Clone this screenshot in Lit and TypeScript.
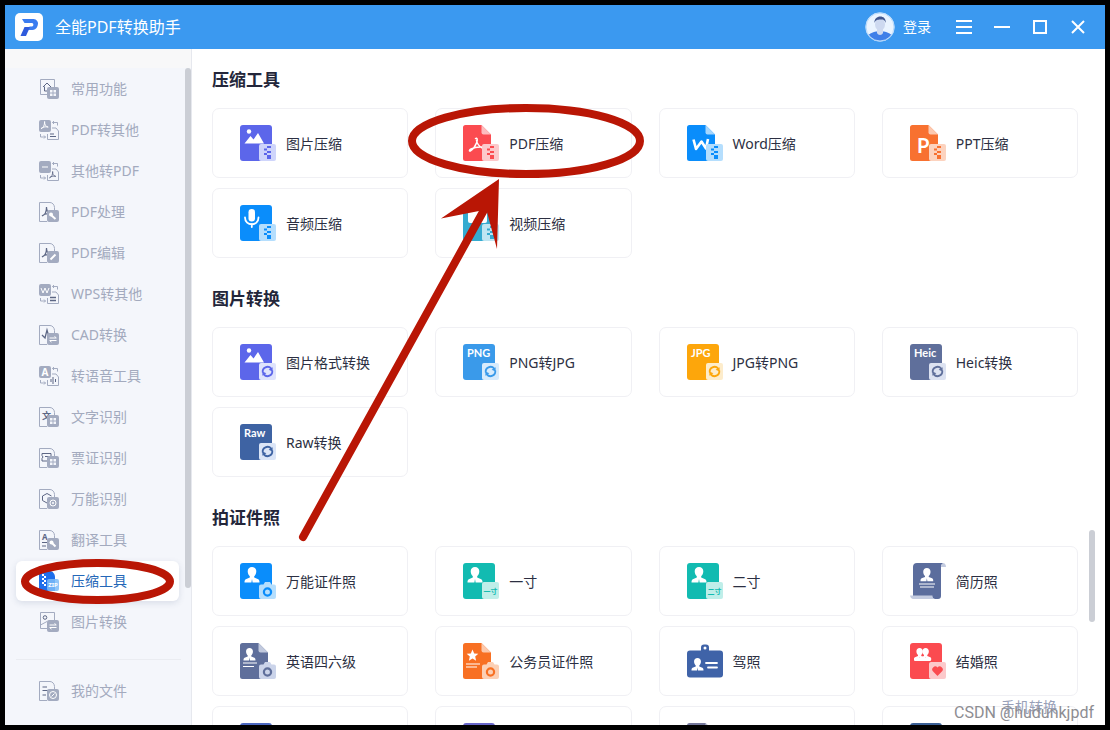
import { LitElement, html, svg, css, SVGTemplateResult } from "lit";
import { customElement, property, state } from "lit/decorators.js";
import { classMap } from "lit/directives/class-map.js";

type Frag = SVGTemplateResult;

/* ---------- badges in the lower right corner of a tool icon ---------- */

const badgePlate = (light: string): Frag =>
  svg`<rect x="19" y="19" width="17" height="17" rx="2" fill=${light} />`;

const zipBadge = (color: string, light: string): Frag => svg`
  ${badgePlate(light)}
  <path fill=${color} d="M27 21h4v2h-4zM24 23.500h3v2h-3zM27 26h4v2h-4zM24 28h3v2h-3zM27 30h4v4h-4z" />`;

const syncBadge = (color: string, light: string): Frag => svg`
  ${badgePlate(light)}
  <g fill="none" stroke=${color} stroke-width="1.800">
    <path d="M22.800 28.600a4.800 4.800 0 0 1 8.400-4" />
    <path d="M32.200 26.400a4.800 4.800 0 0 1-8.400 4" />
  </g>
  <path fill=${color} d="M32.600 23.200v4.200l-4-1.600zM22.400 31.800v-4.200l4 1.600z" />`;

const cameraBadge = (color: string, light: string): Frag => svg`
  <path fill=${light} d="M21 21.500h2.500l1.500-2.500h5l1.500 2.500h2.500a2 2 0 0 1 2 2V34a2 2 0 0 1-2 2H21a2 2 0 0 1-2-2V23.500a2 2 0 0 1 2-2z" />
  <circle cx="27.500" cy="29" r="3.600" fill="none" stroke=${color} stroke-width="2.200" />`;

const textBadge = (label: string, color: string, light: string): Frag => svg`
  ${badgePlate(light)}
  <text x="27.500" y="30.500" font-size="7" text-anchor="middle" fill=${color} font-weight="700">${label}</text>`;

const heartBadge = (color: string, light: string): Frag => svg`
  ${badgePlate(light)}
  <path fill=${color} d="M27.500 33l-4.600-4.700a2.900 2.900 0 0 1 4.600-3.700 2.900 2.900 0 0 1 4.600 3.700z" />`;

/* ---------- bodies ---------- */

const block = (color: string): Frag => svg`<rect width="32" height="36" rx="3" fill=${color} />`;
const sheet = (color: string, fold: string): Frag => svg`
  <path fill=${color} d="M2.500 0H18.500L28 9.500V36H2.500A2.500 2.500 0 0 1 0 33.500V2.500A2.500 2.500 0 0 1 2.500 0z" />
  <path fill=${fold} d="M18.500 0L28 9.500H20.500a2 2 0 0 1-2-2z" />`;

const mountains = svg`<circle cx="9" cy="6.500" r="2.200" fill="#fff" />
  <path fill="#fff" d="M4.500 18.500l6-7.500 3 3.500 4.500-6.500 6 10.500z" />`;
const person = (x: number, y: number, s: number): Frag => svg`
  <path transform="translate(${x} ${y}) scale(${s})" fill="#fff"
    d="M7.500 0c2.600 0 4.300 1.700 4.300 4.300 0 2.100-.9 4-2.100 5v1.200l4 1.700c1 .5 1.300 1.500 1.300 3.300H8.100L7.500 12l-.6 3.500H0c0-1.800.300-2.800 1.300-3.300l4-1.700V9.300C4.100 8.300 3.200 6.400 3.200 4.300 3.200 1.700 4.900 0 7.500 0z" />`;
const word = (t: string): Frag =>
  svg`<text x="4" y="13" font-size="11" font-weight="700" fill="#fff">${t}</text>`;

const toolIcons: Record<string, Frag> = {
  imageZip: svg`${block("#5c66ea")}${mountains}${zipBadge("#5c66ea", "#cfd5fb")}`,
  pdfZip: svg`${sheet("#fb4b50", "#fdbcbe")}
    <path d="M12.500 13.500c1.500-1 2.500 1 1 4.500-1.200 3-3 6-6 8-1.500.5-1.500-1 .5-2 3-1.500 6.500-2.500 11.500-2M13.500 15.500c.5 3 2.500 5.500 5.500 7.500" fill="none" stroke="#fff" stroke-width="1.500" stroke-linecap="round" />
    ${zipBadge("#fb4b50", "#fcc9cb")}`,
  wordZip: svg`${sheet("#0a8dfb", "#a6d6fd")}
    <path d="M6.500 14.500l2.500 9.500 5.500-7.500 4.500 7 2-9.500" fill="none" stroke="#fff" stroke-width="2.600" stroke-linejoin="round" />
    ${zipBadge("#0a8dfb", "#b5defd")}`,
  pptZip: svg`${sheet("#f87130", "#fcc9b0")}
    <text x="7" y="28" font-size="20" font-weight="700" fill="#fff">P</text>
    ${zipBadge("#f87130", "#fcd3bf")}`,
  audioZip: svg`${block("#0a8dfb")}
    <rect x="8.500" y="4" width="6.500" height="12.500" rx="3.200" fill="#fff" />
    <path d="M5 12.500c0 9 13.500 9 13.500 0M11.800 19v3" fill="none" stroke="#fff" stroke-width="1.800" stroke-linecap="round" />
    ${zipBadge("#0a8dfb", "#b5defd")}`,
  videoZip: svg`${block("#35abd0")}<rect x="5" y="5" width="19" height="13" rx="2" fill="#fff" />
    ${zipBadge("#35abd0", "#bfe6f2")}`,
  imageSync: svg`${block("#5c66ea")}${mountains}${syncBadge("#5c66ea", "#dfe3fc")}`,
  png: svg`${block("#3a9aea")}${word("PNG")}${syncBadge("#3a9aea", "#d8ebfc")}`,
  jpg: svg`${block("#fda60b")}${word("JPG")}${syncBadge("#fda60b", "#fdeccb")}`,
  heic: svg`${block("#5f6f9b")}${word("Heic")}${syncBadge("#5f6f9b", "#dce2f1")}`,
  raw: svg`${block("#3e63a3")}${word("Raw")}${syncBadge("#3e63a3", "#dbe5f7")}`,
  idPhoto: svg`${block("#0a8dfb")}${person(4.5, 4, 1)}${cameraBadge("#0a8dfb", "#b5defd")}`,
  oneInch: svg`${block("#12bbb1")}${person(4.5, 4, 1)}${textBadge("一寸", "#12bbb1", "#bfeee9")}`,
  twoInch: svg`${block("#12bbb1")}${person(4.5, 4, 1)}${textBadge("二寸", "#12bbb1", "#bfeee9")}`,
  resume: svg`
    <path fill="#5b6d9d" d="M7 0H35a4 4 0 0 0-4 4V33a3 3 0 0 1-3 3H25a3 3 0 0 1-3-3H3V4a4 4 0 0 1 4-4z" />
    <path fill="#c3cbe0" d="M31 4c0-5 5-5 5 0zM0 32.500H22.500A3 3 0 0 0 25.500 36H5a4 4 0 0 1-5-3.500z" />
    ${person(10.5, 5, 0.85)}
    <path d="M9 21H25M10 24H24" stroke="#fff" stroke-width="1.200" />`,
  cet: svg`${sheet("#5f6f9b", "#c1c9dd")}${person(3.5, 5, 0.8)}
    <path d="M3 20H17M3 23.500H14" stroke="#fff" stroke-width="1.200" />${cameraBadge("#5f6f9b", "#cbd4ea")}`,
  civil: svg`${sheet("#f87023", "#fcc9ad")}
    <path fill="#fff" d="M9.500 6.500l1.700 3.900 4.100.4-3.100 2.800.9 4.200-3.600-2.200-3.600 2.200.9-4.200-3.100-2.800 4.100-.4z" />
    <path d="M3 21H17M3 24H14" stroke="#fff" stroke-width="1.200" />${cameraBadge("#f87023", "#fcd0b5")}`,
  license: svg`
    <rect x="0" y="7.500" width="36" height="27" rx="3" fill="#3f63a8" />
    <path d="M14 9V4.500a3 3 0 0 1 3-3h2a3 3 0 0 1 3 3V9z" fill="#3f63a8" /><circle cx="18" cy="5" r="1.500" fill="#fff" />
    ${person(4.5, 15, 0.8)}
    <path d="M19 20H30M21 24.500H30" stroke="#fff" stroke-width="1.800" stroke-linecap="round" />`,
  wedding: svg`${block("#fb4b50")}${person(4, 5, 0.75)}${person(10, 5, 0.75)}
    <rect x="4" y="15" width="17" height="3" rx="1" fill="#fff" />${heartBadge("#fb4b50", "#fcc9cb")}`,
  rowA: svg`${block("#4c68c0")}`,
  rowB: svg`${block("#6766c9")}`,
  rowC: svg`${sheet("#74779b", "#c5c8da")}`,
  rowD: svg`${block("#3a5f95")}`,
};

/* ---------- line icons of the side menu, 20 x 20 ---------- */

const G = "#a3abc0";
const page = svg`<path d="M8 19.500H.5V.500H11c2.500 0 4.500 2.500 4.500 5V8" fill="none" stroke=${G} />`;
const corner = (inner: Frag): Frag =>
  svg`<rect x="8" y="8" width="12" height="12" rx="2" fill=${G} />${inner}`;
const swap = (top: Frag, bottom: Frag): Frag => svg`
  <rect width="12" height="12" rx="2" fill=${G} />${top}
  <path d="M8.500 14V19.500H19.500V11l-2.500-3H13" fill="none" stroke=${G} />${bottom}
  <path d="M13.500 2.500H18.500V5.500M15 1l-1.500 1.500L15 4M1.500 14V17H6.500M5 15.500L6.500 17 5 18.500" fill="none" stroke=${G} />`;
const hook = (x: number, y: number, c: string, s = 1): Frag => svg`
  <path transform="translate(${x} ${y}) scale(${s})" d="M0 9C3 8 4.500 5 4.500 0c0 4 1 6 4.500 7M0 9c2-2 5-3 9-2" fill="none" stroke=${c} stroke-width="1.200" />`;
const arrows = svg`<path d="M10.500 13H17M15.500 11.500L17.500 13M17.500 15.500H11M12.500 17L10.500 15.500" stroke="#fff" fill="none" />`;
const grid = svg`<path d="M11 11h2.500v2.500H11zM14.500 11H17v2.500h-2.500zM11 14.500h2.500V17H11zM14.500 14.500H17V17h-2.500z" fill="#f4f6fb" />`;
const D = "#5d6785";

const menuIcons: Record<string, Frag> = {
  common: svg`<path d="M8 15.500H1.500V.500H15.500V8" fill="none" stroke=${G} />
    <path d="M4 8L8 4l4 4M5.500 7.500V12H8" fill="none" stroke=${D} />${corner(grid)}`,
  fromPdf: swap(hook(2, 1.5, "#fff", 0.8), svg`<path d="M11 14H15M11 16.500H17" stroke=${D} />`),
  toPdf: swap(svg`<path d="M3 6H9" stroke="#fff" />`, hook(10.5, 10.5, D, 0.7)),
  process: svg`${page}${hook(3, 5, D)}${corner(svg`<path d="M11.500 12.500l5 4.500" stroke="#fff" stroke-width="2" /><circle cx="12" cy="12.500" r="2" fill="#fff" />`)}`,
  edit: svg`${page}${hook(3, 5, D)}${corner(svg`<path d="M11.500 16.500l5-5" stroke="#fff" stroke-width="2" />`)}`,
  wps: swap(svg`<path d="M2 4l2 5 2-5 2 5 2-5" stroke="#fff" fill="none" />`, svg`<path d="M11 13.500H17M17 16.500H11" stroke=${D} stroke-width="1.500" />`),
  cad: svg`${page}<path d="M3 10l3 3L8 5l2 7" fill="none" stroke=${D} stroke-width="1.300" />${corner(arrows)}`,
  speech: swap(svg`<text x="6" y="10" font-size="10" font-weight="700" text-anchor="middle" fill="#fff">A</text>`, svg`<path d="M12 13V16M14 11V18M16.500 13V16" stroke=${D} />`),
  ocr: svg`${page}<text x="3" y="12" font-size="9" font-weight="700" fill=${D}>文</text>${corner(grid)}`,
  ticket: svg`${page}<path d="M3 5.500H12V8M3 5.500V7.500l1 1.500-1 1.500V13H8M6 8.500H10" fill="none" stroke=${D} />${corner(grid)}`,
  universal: svg`${page}<path d="M8 14L3.500 11.500V7L8 4.500 12.500 7" fill="none" stroke=${D} />${corner(svg`<circle cx="14" cy="14" r="3" stroke="#fff" fill="none" /><circle cx="14" cy="14" r="1" fill="#fff" />`)}`,
  translate: svg`${page}<text x="3" y="10" font-size="8" font-weight="700" fill=${D}>A</text>
    <path d="M3 12.500H8M3 16H7" stroke=${D} />${corner(svg`<path d="M11.500 11.500L16.500 16.500" stroke="#fff" stroke-width="2" /><circle cx="12.500" cy="12.500" r="2" fill="#fff" />`)}`,
  zip: svg`<path d="M2 0H11c2.500 0 5 3 5 6V20H2a2 2 0 0 1-2-2V2A2 2 0 0 1 2 0z" fill="#1f6feb" />
    <path d="M3 3h2v2H3zM5 5h2v2H5zM3 7h2v2H3zM5 9h2v2H5zM3 11h2v2H3zM5 13h2v2H5z" fill="#fff" />
    <rect x="8" y="8" width="12" height="12" rx="2" fill="#7dbcf8" fill-opacity=".85" />
    <text x="14" y="16" font-size="6" font-weight="700" text-anchor="middle" fill="#fff">ZIP</text>`,
  image: svg`<path d="M8 16.500H1.500V.500H15.500V8M1.500 13L8 9.500" fill="none" stroke=${G} />
    <circle cx="6" cy="5.500" r="1.800" fill="none" stroke=${D} />${corner(arrows)}`,
  files: svg`${page}<path d="M3.500 6H8M3.500 9.500H10M3.500 14H7" stroke=${D} />${corner(svg`<circle cx="14" cy="14" r="3.500" stroke="#fff" fill="none" /><path d="M12.500 15.500l3-3" stroke="#fff" />`)}`,
};

interface Tool { icon: string; label: string }
interface Section { title: string; tools: Tool[] }

const menu: Tool[] = [
  { icon: "common", label: "常用功能" },
  { icon: "fromPdf", label: "PDF转其他" },
  { icon: "toPdf", label: "其他转PDF" },
  { icon: "process", label: "PDF处理" },
  { icon: "edit", label: "PDF编辑" },
  { icon: "wps", label: "WPS转其他" },
  { icon: "cad", label: "CAD转换" },
  { icon: "speech", label: "转语音工具" },
  { icon: "ocr", label: "文字识别" },
  { icon: "ticket", label: "票证识别" },
  { icon: "universal", label: "万能识别" },
  { icon: "translate", label: "翻译工具" },
  { icon: "zip", label: "压缩工具" },
  { icon: "image", label: "图片转换" },
];

const sections: Section[] = [
  {
    title: "压缩工具",
    tools: [
      { icon: "imageZip", label: "图片压缩" },
      { icon: "pdfZip", label: "PDF压缩" },
      { icon: "wordZip", label: "Word压缩" },
      { icon: "pptZip", label: "PPT压缩" },
      { icon: "audioZip", label: "音频压缩" },
      { icon: "videoZip", label: "视频压缩" },
    ],
  },
  {
    title: "图片转换",
    tools: [
      { icon: "imageSync", label: "图片格式转换" },
      { icon: "png", label: "PNG转JPG" },
      { icon: "jpg", label: "JPG转PNG" },
      { icon: "heic", label: "Heic转换" },
      { icon: "raw", label: "Raw转换" },
    ],
  },
  {
    title: "拍证件照",
    tools: [
      { icon: "idPhoto", label: "万能证件照" },
      { icon: "oneInch", label: "一寸" },
      { icon: "twoInch", label: "二寸" },
      { icon: "resume", label: "简历照" },
      { icon: "cet", label: "英语四六级" },
      { icon: "civil", label: "公务员证件照" },
      { icon: "license", label: "驾照" },
      { icon: "wedding", label: "结婚照" },
      { icon: "rowA", label: "" },
      { icon: "rowB", label: "" },
      { icon: "rowC", label: "" },
      { icon: "rowD", label: "" },
    ],
  },
];

@customElement("tool-card")
class ToolCard extends LitElement {
  @property() icon = "";
  @property() label = "";

  static styles = css`
    :host { display: block; }
    .card {
      box-sizing: border-box;
      width: 100%;
      height: 70px;
      display: flex;
      align-items: center;
      gap: 10px;
      padding: 0 27px;
      border: 1px solid #f0f0f4;
      border-radius: 7px;
      background: #fff;
      font: inherit;
      font-size: 14px;
      line-height: 20px;
      color: #2c2f42;
      text-align: left;
      white-space: nowrap;
      cursor: pointer;
    }
    .card:hover { border-color: #c9dcf5; }
    .glyph { flex: none; width: 36px; height: 36px; font-family: Lato, "Noto Sans CJK SC", sans-serif; }
    .label { padding-top: 2px; }
  `;

  render() {
    return html`<button class="card" type="button">
      <svg class="glyph" viewBox="0 0 36 36" aria-hidden="true">${toolIcons[this.icon]}</svg>
      <span class="label">${this.label}</span>
    </button>`;
  }
}

@customElement("app-root")
class AppRoot extends LitElement {
  @state() active = "zip";

  static styles = css`
    :host {
      position: relative;
      box-sizing: border-box;
      display: flex;
      flex-direction: column;
      height: 100vh;
      border: 5px solid #000;
      overflow: hidden;
      background: #fff;
      font-family: "Noto Sans", "Noto Sans CJK SC", sans-serif;
      font-weight: 400;
      font-size: 14px;
      line-height: 20px;
    }
    .titlebar {
      flex: none;
      display: flex;
      align-items: center;
      height: 44px;
      padding: 0 19px 0 10px;
      background: #3b99f0;
      color: #fff;
    }
    .logo { width: 28px; height: 28px; margin-right: 12px; }
    .title { margin: 0; flex: 1; font-size: 16px; font-weight: 400; line-height: 24px; }
    .login, .control {
      display: flex;
      align-items: center;
      padding: 0;
      border: 0;
      background: none;
      color: inherit;
      font: inherit;
      cursor: pointer;
    }
    .login { gap: 8px; margin-right: 25px; }
    .avatar { width: 30px; height: 30px; }
    .controls { display: flex; gap: 22px; }
    .control svg { width: 16px; height: 16px; }
    .body { flex: 1; min-height: 0; display: flex; }
    .side {
      box-sizing: border-box;
      flex: none;
      width: 187px;
      display: flex;
      flex-direction: column;
      padding-top: 19px;
      border-right: 1px solid #e6e8ee;
      background: linear-gradient(#f8f8f9 19px, #f4f6fb 19px);
    }
    .scroll { flex: 1; min-height: 0; display: flex; justify-content: space-between; }
    .menu {
      flex: 1;
      display: flex;
      flex-direction: column;
      gap: 1px;
      padding: 1px 6px 0 11px;
      overflow: hidden;
    }
    .item {
      flex: none;
      box-sizing: border-box;
      display: flex;
      align-items: center;
      gap: 12px;
      height: 40px;
      padding: 0 23px;
      border-radius: 6px;
      color: #a3aabe;
      text-decoration: none;
      white-space: nowrap;
    }
    .item svg { flex: none; width: 20px; height: 20px; }
    .item.on { background: #fff; color: #2467b8; box-shadow: 0 2px 6px rgba(60, 80, 120, 0.15); }
    .thumb { flex: none; width: 6px; height: 520px; border-radius: 3px; background: #cbced5; }
    .foot {
      flex: none;
      margin: 0 10px 0 11px;
      padding: 11px 0 14px;
      border-top: 1px solid #eaecf1;
    }
    .foot .item { padding: 0 23px; }
    .main { flex: 1; min-width: 0; display: flex; position: relative; }
    .content {
      flex: 1;
      min-width: 0;
      display: flex;
      flex-direction: column;
      gap: 28px;
      padding: 19px 11px 0 20px;
      overflow: hidden;
    }
    .heading { margin: 0 0 16px; font-size: 17px; line-height: 24px; font-weight: 700; color: #23263a; }
    .cards { display: grid; grid-template-columns: repeat(4, 1fr); gap: 10px 27px; margin-bottom: 1px; }
    .rail { flex: none; width: 16px; padding-top: 481px; }
    .rail .thumb { height: 92px; }
    .phone { position: absolute; right: 48px; bottom: 8px; color: #98a0b8; }
    .mark {
      position: absolute;
      right: 11px;
      bottom: 0;
      font-family: Roboto, sans-serif;
      font-size: 16px;
      line-height: 24px;
      color: #8d8d92;
    }
    .notes { position: absolute; left: -5px; top: -5px; width: 1110px; height: 730px; pointer-events: none; }
  `;

  private item(t: Tool) {
    return html`<a
      href="#${t.icon}"
      class=${classMap({ item: true, on: this.active === t.icon })}
      @click=${(e: Event) => { e.preventDefault(); this.active = t.icon; }}
    ><svg viewBox="0 0 20 20" aria-hidden="true">${menuIcons[t.icon]}</svg><span>${t.label}</span></a>`;
  }

  private control(name: string, shape: Frag) {
    return html`<button class="control" type="button" aria-label=${name}>
      <svg viewBox="0 0 16 16" fill="none" stroke="#fff" stroke-width="2">${shape}</svg>
    </button>`;
  }

  render() {
    return html`
      <header class="titlebar">
        <svg class="logo" viewBox="0 0 28 28" aria-hidden="true">
          <rect width="28" height="28" rx="5" fill="#fff" />
          <path d="M7 6H18.500a4.500 4.500 0 0 1 4.300 6l-.5 1.500a5.500 5.500 0 0 1-5 3.500H13l1.600-3.500H17a1.800 1.800 0 0 0 0-3.500H9.500z" fill="#3a7cf0" />
          <path d="M9.500 14H15L11 23H5.500z" fill="#2f5bdc" />
        </svg>
        <h1 class="title">全能PDF转换助手</h1>
        <button class="login" type="button">
          <svg class="avatar" viewBox="0 0 30 30" aria-hidden="true">
            <defs><clipPath id="face"><circle cx="15" cy="15" r="14" /></clipPath></defs>
            <circle cx="15" cy="15" r="14.500" fill="#eaf4ff" />
            <g clip-path="url(#face)">
              <path d="M1 30c0-7 4-9 10-10.500h8c6 1.500 10 3.500 10 10.500z" fill="#3f7fe8" />
              <path d="M12 16h6v5c-1 2.500-5 2.500-6 0z" fill="#cfdaf0" />
              <ellipse cx="15" cy="12.500" rx="5" ry="6" fill="#cdd9f0" />
              <path d="M9.500 11C8.500 3 21.500 2 20.700 11c-1-3-2-3.500-5.200-3.500S10.500 8 9.500 11z" fill="#42578f" />
            </g>
            <circle cx="15" cy="15" r="14" fill="none" stroke="#b5d8fb" />
          </svg>
          <span>登录</span>
        </button>
        <div class="controls">
          ${this.control("菜单", svg`<path d="M0 2H16M0 8H16M0 14H16" />`)}
          ${this.control("最小化", svg`<path d="M0 8H16" />`)}
          ${this.control("最大化", svg`<rect x="2" y="2" width="12" height="12" />`)}
          ${this.control("关闭", svg`<path d="M2 2L14 14M14 2L2 14" />`)}
        </div>
      </header>
      <div class="body">
        <aside class="side">
          <div class="scroll">
            <nav class="menu">${menu.map((t) => this.item(t))}</nav>
            <div class="thumb"></div>
          </div>
          <div class="foot">${this.item({ icon: "files", label: "我的文件" })}</div>
        </aside>
        <main class="main">
          <div class="content">
            ${sections.map((s) => html`<section>
              <h2 class="heading">${s.title}</h2>
              <div class="cards">
                ${s.tools.map((t) => html`<tool-card .icon=${t.icon} .label=${t.label}></tool-card>`)}
              </div>
            </section>`)}
          </div>
          <div class="rail"><div class="thumb"></div></div>
          <span class="phone">手机转换</span>
          <span class="mark">CSDN @hudunkjpdf</span>
        </main>
      </div>
      <svg class="notes" viewBox="0 0 1110 730" aria-hidden="true">
        <g fill="none" stroke="#b91605" stroke-width="8">
          <ellipse cx="526" cy="141" rx="114" ry="33" />
          <ellipse cx="97.500" cy="581.500" rx="72.500" ry="18.500" />
          <path d="M303 537L484 210" stroke-linecap="round" />
        </g>
        <path d="M499 179L441 218.500L479 211L487 212L497 249z" fill="#b91605" />
      </svg>`;
  }
}
